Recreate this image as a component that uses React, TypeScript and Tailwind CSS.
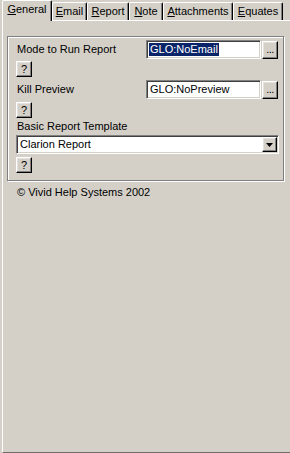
import React from "react"

const raised =
  "border border-t-white border-l-white border-r-black border-b-black shadow-[inset_-1px_-1px_0_#808080,inset_1px_1px_0_#e4e1dc] bg-[#d4d0c8]"
const sunken =
  "border border-t-[#808080] border-l-[#808080] border-r-white border-b-white shadow-[inset_1px_1px_0_#404040,inset_-1px_-1px_0_#d4d0c8] bg-white"

function Tab({ label, mn, rest, w, active }: { label?: string; mn: string; rest: string; w: string; active?: boolean }) {
  return (
    <div
      className={
        "flex items-center justify-center rounded-t-[2px] border-l border-t border-r border-l-white border-t-white border-r-black shadow-[inset_-1px_0_0_#808080] bg-[#d4d0c8] " +
        w +
        (active ? " h-[21px] -mb-px relative z-10 pb-[3px]" : " h-[18px] pb-px")
      }
      title={label}
    >
      <span>
        <span className="underline underline-offset-[1px]">{mn}</span>
        {rest}
      </span>
    </div>
  )
}

function HelpBtn() {
  return (
    <div className={"ml-[8px] w-[16px] h-[16px] flex items-center justify-center text-[11px] leading-none " + raised}>
      ?
    </div>
  )
}

function EllipsisBtn() {
  return (
    <div className={"ml-[1px] w-[16px] h-[18px] flex items-end justify-center pb-[3px] text-[11px] leading-none tracking-[-0.5px] " + raised}>
      ...
    </div>
  )
}

export default function App() {
  return (
    <div className="w-[290px] h-[453px] overflow-hidden bg-[#d4d0c8] flex flex-col text-[11px] text-black font-['Liberation_Sans',Arial,sans-serif] leading-[13px]">
      <div className="flex items-end h-[20px] pl-[2px]">
        <Tab mn="G" rest="eneral" w="w-[50px]" active />
        <Tab mn="E" rest="mail" w="w-[35px]" />
        <Tab mn="R" rest="eport" w="w-[42px]" />
        <Tab mn="N" rest="ote" w="w-[34px]" />
        <Tab mn="A" rest="ttachments" w="w-[70px]" />
        <Tab mn="E" rest="quates" w="w-[50px]" />
      </div>
      <div className="flex-1 ml-[2px] -mr-[2px] border-l border-t border-b border-l-white border-t-white border-b-[#6f6b67]">
        <div className="ml-[4px] mt-[15px] w-[277px] border border-[#808080] shadow-[inset_1px_1px_0_#fff,1px_1px_0_#fff] pt-[2px] pb-[7px]">
          <div className="mt-[1px] h-[19px] flex items-center">
            <span className="ml-[9px] w-[129px]">Mode to Run Report</span>
            <div className={"w-[115px] h-[19px] flex items-center pl-[2px] " + sunken}>
              <span className="bg-[#0a246a] text-white px-px">GLO:NoEmail</span>
            </div>
            <EllipsisBtn />
          </div>
          <div className="mt-[2px]">
            <HelpBtn />
          </div>
          <div className="mt-[3px] h-[19px] flex items-center">
            <span className="ml-[9px] w-[129px]">Kill Preview</span>
            <div className={"w-[115px] h-[19px] flex items-center pl-[3px] " + sunken}>
              <span>GLO:NoPreview</span>
            </div>
            <EllipsisBtn />
          </div>
          <div className="mt-[3px]">
            <HelpBtn />
          </div>
          <div className="mt-[2px] ml-[9px] h-[13px]">Basic Report Template</div>
          <div className={"mt-[2px] ml-[8px] w-[263px] h-[19px] flex items-center justify-between pl-[3px] pr-[1px] " + sunken}>
            <span>Clarion Report</span>
            <div className={"w-[15px] h-[15px] flex items-center justify-center " + raised}>
              <svg width="7" height="4" viewBox="0 0 7 4">
                <path d="M0 0h7L3.5 4z" fill="#000" />
              </svg>
            </div>
          </div>
          <div className="mt-[3px]">
            <HelpBtn />
          </div>
        </div>
        <div className="mt-[5px] ml-[14px]">© Vivid Help Systems 2002</div>
      </div>
    </div>
  )
}
